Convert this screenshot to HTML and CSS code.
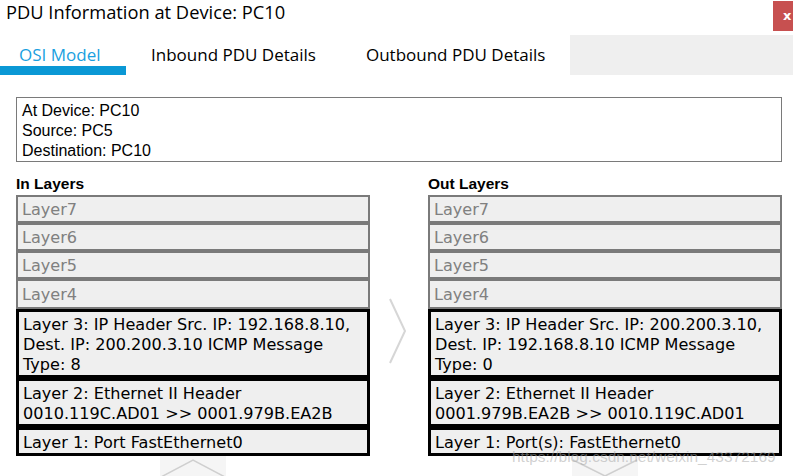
FILE: index.html
```html
<!DOCTYPE html>
<html>
<head>
<meta charset="utf-8">
<link rel="stylesheet" href="styles.css">
</head>
<body>
<div class="window">
  <div class="titlebar">
    <span class="title">PDU Information at Device: PC10</span>
    <span class="close">x</span>
  </div>
  <div class="tabs">
    <div class="tab active">OSI Model</div>
    <div class="tab">Inbound PDU Details</div>
    <div class="tab">Outbound PDU Details</div>
    <div class="tab-fill"></div>
  </div>
  <div class="content">
    <div class="info">
      <div>At Device: PC10</div>
      <div>Source: PC5</div>
      <div>Destination: PC10</div>
    </div>
    <div class="columns">
      <div class="col">
        <div class="col-head">In Layers</div>
        <div class="layer dim">Layer7</div>
        <div class="layer dim">Layer6</div>
        <div class="layer dim">Layer5</div>
        <div class="layer dim l4">Layer4</div>
        <div class="layer on">Layer 3: IP Header Src. IP: 192.168.8.10,<br>Dest. IP: 200.200.3.10 ICMP Message<br>Type: 8</div>
        <div class="layer on">Layer 2: Ethernet II Header<br>0010.119C.AD01 &gt;&gt; 0001.979B.EA2B</div>
        <div class="layer on">Layer 1: Port FastEthernet0</div>
        <div class="nav-btn">
          <svg width="66" height="21" viewBox="0 0 66 21"><polyline points="1,21 33,4 65,21" fill="none" stroke="#cfcfcf" stroke-width="1.5"/></svg>
        </div>
      </div>
      <div class="mid">
        <svg class="arrow" width="20" height="66" viewBox="0 0 20 66"><polyline points="2,1 17,33 2,65" fill="none" stroke="#d6d6d6" stroke-width="2"/></svg>
      </div>
      <div class="col">
        <div class="col-head">Out Layers</div>
        <div class="layer dim">Layer7</div>
        <div class="layer dim">Layer6</div>
        <div class="layer dim">Layer5</div>
        <div class="layer dim l4">Layer4</div>
        <div class="layer on">Layer 3: IP Header Src. IP: 200.200.3.10,<br>Dest. IP: 192.168.8.10 ICMP Message<br>Type: 0</div>
        <div class="layer on">Layer 2: Ethernet II Header<br>0001.979B.EA2B &gt;&gt; 0010.119C.AD01</div>
        <div class="layer on">Layer 1: Port(s): FastEthernet0</div>
        <div class="nav-btn">
          <svg width="66" height="21" viewBox="0 0 66 21"><polyline points="1,4 33,20 65,4" fill="none" stroke="#cfcfcf" stroke-width="1.5"/></svg>
        </div>
      </div>
    </div>
  </div>
  <div class="watermark">https://blog.csdn.net/weixin_43372169</div>
</div>
</body>
</html>
```
FILE: styles.css
```css
html, body {
  margin: 0;
  padding: 0;
  background: #ffffff;
}
.window {
  position: relative;
  width: 793px;
  height: 476px;
  overflow: hidden;
  background: #ffffff;
}
.titlebar {
  height: 35px;
  display: flex;
  align-items: flex-start;
}
.title {
  font-family: "Open Sans", sans-serif;
  font-size: 18.3px;
  line-height: 24px;
  color: #000;
  margin-left: 6px;
}
.close {
  position: absolute;
  top: 1px;
  right: 0;
  width: 20px;
  height: 30px;
  background: #c75050;
  color: #fff;
  font-family: "DejaVu Sans", sans-serif;
  font-weight: bold;
  font-size: 13px;
  line-height: 30px;
  padding-left: 10px;
  box-sizing: border-box;
  overflow: hidden;
}
.tabs {
  display: flex;
  height: 40px;
}
.tab {
  font-family: "Open Sans", sans-serif;
  font-size: 17px;
  line-height: 40px;
  padding: 0 25px;
  color: #000;
  box-sizing: border-box;
  white-space: nowrap;
}
.tab.active {
  color: #1a9fe0;
  width: 126px;
  padding: 0 0 0 19px;
  border-bottom: 9px solid #0a98d5;
  line-height: 40px;
  height: 40px;
}
.tab-fill {
  flex: 1;
  background: #efefef;
}
.content {
  padding: 22px 11px 0 16px;
}
.info {
  border: 1px solid #7a7a7a;
  height: 59px;
  padding: 3px 5px 1px;
  font-family: "Liberation Sans", Arial, sans-serif;
  font-size: 16px;
  line-height: 20px;
  color: #000;
}
.columns {
  display: grid;
  grid-template-columns: 354px 58px 354px;
}
.col-head {
  font-family: "Liberation Sans", Arial, sans-serif;
  font-weight: bold;
  font-size: 15.5px;
  line-height: 20px;
  margin-top: 12px;
  height: 21px;
}
.layer {
  background: #efefef;
  font-family: "DejaVu Sans", sans-serif;
  font-size: 16.1px;
  line-height: 20px;
  white-space: nowrap;
}
.layer.dim {
  border: 2px solid #7a7a7a;
  color: #808080;
  padding: 3px 4px 1px;
}
.layer.dim.l4 {
  padding: 4px 4px 2px;
}
.layer.on {
  border: 3px solid #000;
  color: #000;
  padding: 3px 4px 0;
}
.nav-btn {
  width: 66px;
  height: 21px;
  margin: 0 auto;
  background: #f5f5f5;
}
.nav-btn svg {
  display: block;
}
.mid {
  display: flex;
  justify-content: center;
  padding-top: 136px;
  padding-right: 2px;
}
.arrow {
  display: block;
}
.watermark {
  position: absolute;
  left: 512px;
  top: 448px;
  font-family: "Liberation Sans", Arial, sans-serif;
  font-size: 15.5px;
  color: rgba(170, 170, 170, 0.55);
  white-space: nowrap;
}
```
